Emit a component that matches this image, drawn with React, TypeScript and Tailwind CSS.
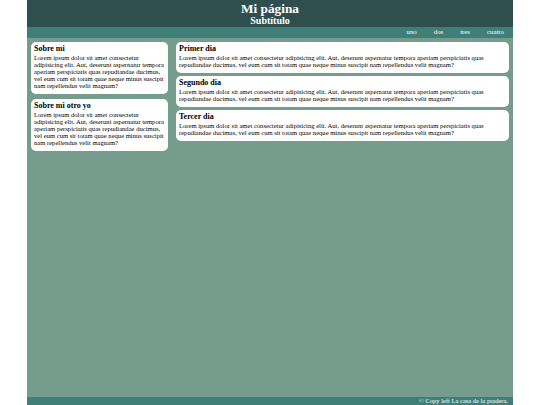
import React from "react";

const lorem =
  "Lorem ipsum dolor sit amet consectetur adipisicing elit. Aut, deserunt aspernatur tempora aperiam perspiciatis quas repudiandae ducimus, vel eum cum sit totam quae neque minus suscipit nam repellendus velit magnam?";

function Card({ title }: { title: string }) {
  return (
    <section className="bg-white rounded-[5px] px-[3px] pt-[2px] pb-[5px] text-black">
      <h2 className="font-bold text-[8px] leading-[10px]">{title}</h2>
      <p className="text-[6.6px] leading-[7px]">{lorem}</p>
    </section>
  );
}

export default function App() {
  return (
    <div
      className="w-[486px] mx-auto h-[405px] flex flex-col"
      style={{ fontFamily: '"Liberation Serif", "Times New Roman", serif' }}
    >
      <header className="bg-[#2f4f4f] text-white text-center h-[27px] flex flex-col items-center pt-[1px]">
        <h1 className="font-bold text-[13.3px] leading-[15px]">Mi página</h1>
        <p className="font-bold text-[10px] leading-[10px]">Subtítulo</p>
      </header>
      <nav className="bg-[#3f7f77] h-[11px] flex justify-end items-center gap-[17px] pr-[9px] text-white text-[6.8px]">
        <a>uno</a>
        <a>dos</a>
        <a>tres</a>
        <a>cuatro</a>
      </nav>
      <main className="bg-[#759c8d] flex-1 flex gap-[8px] px-[4px] pt-[4px] items-start">
        <div className="w-[137px] flex flex-col gap-[5px]">
          <Card title="Sobre mi" />
          <Card title="Sobre mi otro yo" />
        </div>
        <div className="flex-1 flex flex-col gap-[3px]">
          <Card title="Primer dia" />
          <Card title="Segundo dia" />
          <Card title="Tercer dia" />
        </div>
      </main>
      <footer className="bg-[#3f7f77] h-[8px] text-white text-[6.5px] leading-[8px] text-right pr-[5px]">
        © Copy left La casa de la pradera.
      </footer>
    </div>
  );
}
